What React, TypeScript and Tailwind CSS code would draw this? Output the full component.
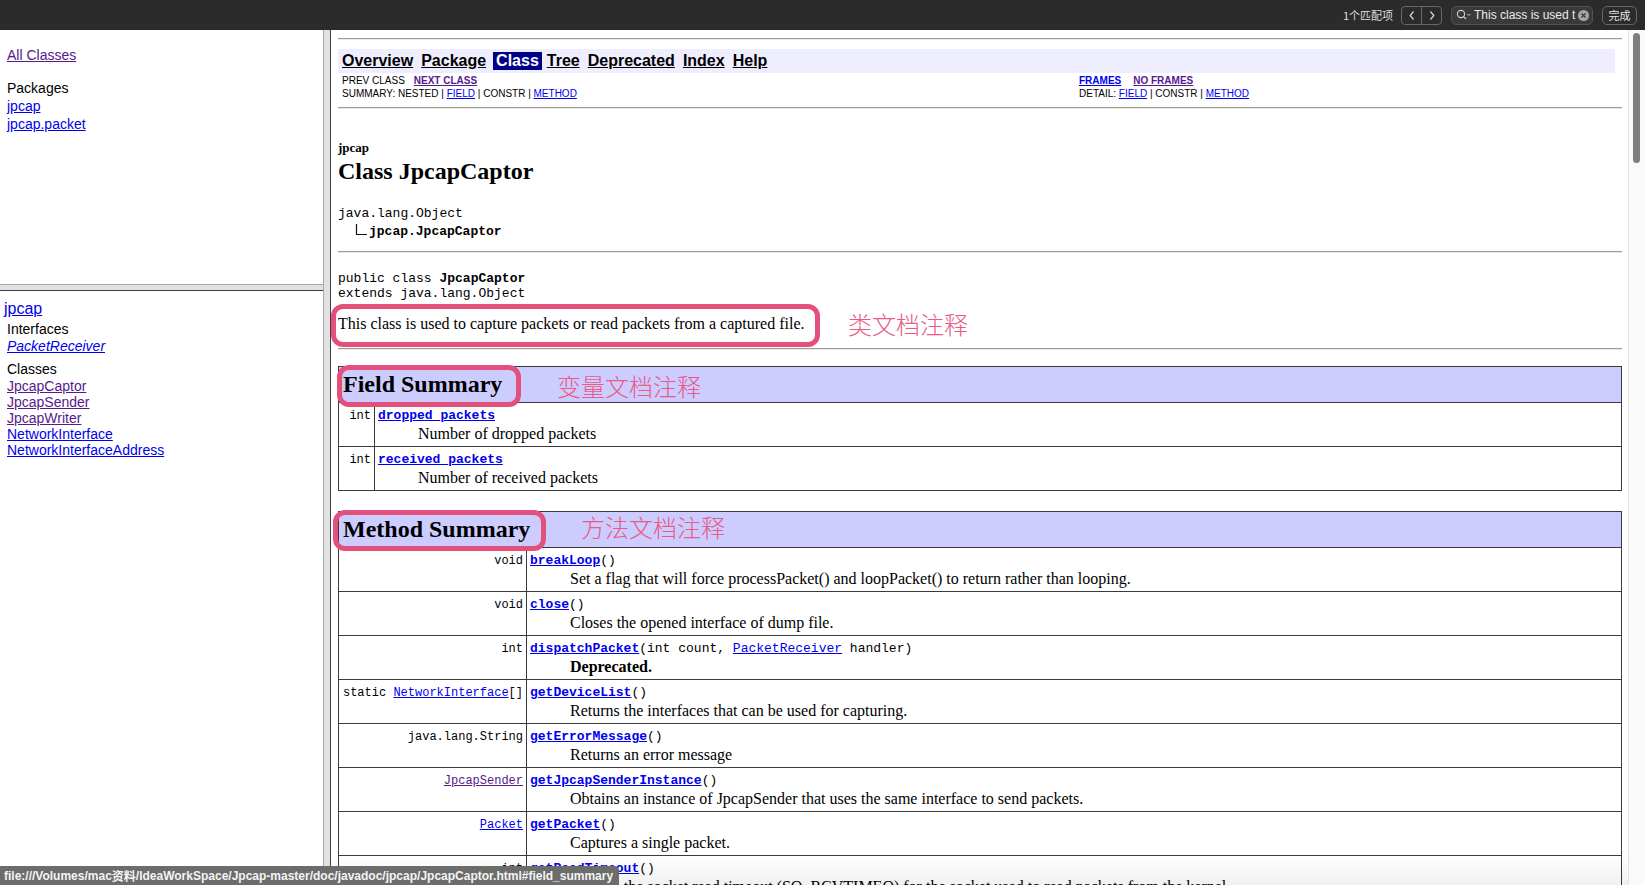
import React from 'react';

const SERIF = "font-['Liberation_Serif','Times_New_Roman',serif]";
const SANS = "font-['Liberation_Sans',Arial,sans-serif]";
const MONO = "font-['Liberation_Mono','Courier_New',monospace]";
const CJK = "font-['Noto_Sans_CJK_SC','Noto_Sans',sans-serif]";

const LINK = 'text-[#0000ee] underline';
const VISITED = 'text-[#551a8b] underline';

type Method = {
  type: React.ReactNode;
  name: string;
  args?: React.ReactNode;
  desc: React.ReactNode;
};

const methods: Method[] = [
  { type: 'void', name: 'breakLoop', desc: 'Set a flag that will force processPacket() and loopPacket() to return rather than looping.' },
  { type: 'void', name: 'close', desc: 'Closes the opened interface of dump file.' },
  {
    type: 'int',
    name: 'dispatchPacket',
    args: (
      <>
        (int count, <a className={LINK}>PacketReceiver</a> handler)
      </>
    ),
    desc: <b>Deprecated.</b>,
  },
  {
    type: (
      <>
        static <a className={LINK}>NetworkInterface</a>[]
      </>
    ),
    name: 'getDeviceList',
    desc: 'Returns the interfaces that can be used for capturing.',
  },
  { type: 'java.lang.String', name: 'getErrorMessage', desc: 'Returns an error message' },
  {
    type: <a className={VISITED}>JpcapSender</a>,
    name: 'getJpcapSenderInstance',
    desc: 'Obtains an instance of JpcapSender that uses the same interface to send packets.',
  },
  { type: <a className={LINK}>Packet</a>, name: 'getPacket', desc: 'Captures a single packet.' },
  {
    type: 'int',
    name: 'getReadTimeout',
    desc: 'Returns the socket read timeout (SO_RCVTIMEO) for the socket used to read packets from the kernel.',
  },
];

const fields = [
  { name: 'dropped_packets', desc: 'Number of dropped packets' },
  { name: 'received_packets', desc: 'Number of received packets' },
];

function Chevron({ dir }: { dir: 'left' | 'right' }) {
  return (
    <svg width="8" height="11" viewBox="0 0 8 11">
      <path
        d={dir === 'left' ? 'M5.5 1.5 L2.2 5.5 L5.5 9.5' : 'M2.5 1.5 L5.8 5.5 L2.5 9.5'}
        fill="none"
        stroke="#d8d8d8"
        strokeWidth="1.2"
      />
    </svg>
  );
}

function FindBar() {
  return (
    <div className={`flex h-[30px] shrink-0 items-center justify-end gap-[8px] bg-[#2b2b2b] pr-[8px] ${SANS}`}>
      <span className={`text-[11px] text-[#dedede] ${CJK}`}>1个匹配项</span>
      <div className="flex h-[19px] w-[41px] items-center rounded-[4px] border border-[#676767]">
        <span className="flex h-full flex-1 items-center justify-center">
          <Chevron dir="left" />
        </span>
        <span className="h-full w-px bg-[#676767]" />
        <span className="flex h-full flex-1 items-center justify-center">
          <Chevron dir="right" />
        </span>
      </div>
      <div className="ml-[1px] flex h-[19px] w-[142px] items-center rounded-[5px] border border-[#525252] bg-[#3a3a3a] pl-[4px] pr-[3px]">
        <svg width="16" height="12" viewBox="0 0 16 12">
          <circle cx="5" cy="5" r="3.6" fill="none" stroke="#cfcfcf" strokeWidth="1.1" />
          <path d="M7.6 7.6 L10 10" stroke="#cfcfcf" strokeWidth="1.2" />
          <path d="M11.3 5 L12.8 6.5 L14.3 5" fill="none" stroke="#cfcfcf" strokeWidth="1" />
        </svg>
        <span className="ml-[2px] flex-1 overflow-hidden whitespace-nowrap text-[12px] leading-[17px] text-[#ececec]">
          This class is used t
        </span>
        <svg width="11" height="11" viewBox="0 0 11 11">
          <circle cx="5.5" cy="5.5" r="5.5" fill="#a6a6a6" />
          <path d="M3.5 3.5 L7.5 7.5 M7.5 3.5 L3.5 7.5" stroke="#3a3a3a" strokeWidth="1.3" />
        </svg>
      </div>
      <div className={`ml-[1px] flex h-[19px] w-[35px] items-center justify-center rounded-[5px] border border-[#676767] text-[11px] text-[#e6e6e6] ${CJK}`}>
        完成
      </div>
    </div>
  );
}

function LeftFrames() {
  return (
    <div className={`flex w-[323px] shrink-0 flex-col text-black ${SANS}`}>
      <div className="h-[254px] shrink-0 pl-[7px] pt-[16px] text-[14px] leading-[18px]">
        <a className={VISITED}>All Classes</a>
        <div className="mt-[15px]">Packages</div>
        <div>
          <a className={LINK}>jpcap</a>
        </div>
        <div>
          <a className={LINK}>jpcap.packet</a>
        </div>
      </div>
      <div className="h-[7px] shrink-0 border-y border-t-[#a8a8a8] border-b-[#3c3c3c] bg-[#e2e2e2]" />
      <div className="flex-1 pt-[8px]">
        <div className="pl-[4px] text-[16px] leading-[19px]">
          <a className={LINK}>jpcap</a>
        </div>
        <div className="pl-[7px] text-[14px]">
          <div className="mt-[3px] leading-[17px]">Interfaces</div>
          <div className="leading-[17px]">
            <a className={`italic ${LINK}`}>PacketReceiver</a>
          </div>
          <div className="mt-[6px] leading-[17px]">Classes</div>
          <div className="leading-[16px]">
            <div><a className={VISITED}>JpcapCaptor</a></div>
            <div><a className={VISITED}>JpcapSender</a></div>
            <div><a className={VISITED}>JpcapWriter</a></div>
            <div><a className={LINK}>NetworkInterface</a></div>
            <div><a className={LINK}>NetworkInterfaceAddress</a></div>
          </div>
        </div>
      </div>
    </div>
  );
}

function Hr({ className = '' }: { className?: string }) {
  return <div className={`h-[2px] border-y border-t-[#9b9b9b] border-b-[#e9e9e9] ${className}`} />;
}

function NavBar() {
  const items = ['Overview', 'Package', 'Class', 'Tree', 'Deprecated', 'Index', 'Help'];
  return (
    <div className={`mr-[7px] mt-[9px] flex h-[24px] items-center gap-[2px] bg-[#eeeeff] pl-[1px] ${SANS}`}>
      {items.map((it) =>
        it === 'Class' ? (
          <span key={it} className="ml-[2px] bg-[#00008b] px-[3px] text-[16px] font-bold leading-[18px] text-white">
            {it}
          </span>
        ) : (
          <span key={it} className="px-[3px] text-[16px] font-bold leading-[18px] text-black underline">
            {it}
          </span>
        )
      )}
    </div>
  );
}

function SubNav() {
  return (
    <div className={`flex pt-[1px] text-[10px] leading-[13px] text-black ${SANS}`}>
      <div className="w-[737px] shrink-0 pl-[4px]">
        <div>
          PREV CLASS<a className={`ml-[9px] font-bold ${VISITED}`}>NEXT CLASS</a>
        </div>
        <div>
          SUMMARY: NESTED | <a className={LINK}>FIELD</a> | CONSTR | <a className={LINK}>METHOD</a>
        </div>
      </div>
      <div className="pl-[4px]">
        <div>
          <a className={`font-bold ${LINK}`}>FRAMES</a>
          <a className={`ml-[12px] font-bold ${VISITED}`}>NO FRAMES</a>
        </div>
        <div>
          DETAIL: <a className={LINK}>FIELD</a> | CONSTR | <a className={LINK}>METHOD</a>
        </div>
      </div>
    </div>
  );
}

function FieldTable() {
  return (
    <div className="mt-[16px] border border-[#3a3a3a]">
      <div className={`h-[36px] border-b border-[#3a3a3a] bg-[#ccccff] pl-[4px] text-[24px] font-bold leading-[35px] text-black ${SERIF}`}>
        Field Summary
      </div>
      {fields.map((f, i) => (
        <div key={f.name} className={`flex ${i < fields.length - 1 ? 'h-[44px] border-b border-[#3a3a3a]' : 'h-[43px]'}`}>
          <div className={`w-[36px] shrink-0 border-r border-[#3a3a3a] pr-[3px] pt-[6px] text-right text-[12px] leading-[14px] text-black ${MONO}`}>
            int
          </div>
          <div className="flex-1 pl-[3px] pt-[5px]">
            <div className={`h-[16px] text-[13px] leading-[16px] ${MONO}`}>
              <a className={`font-bold ${LINK}`}>{f.name}</a>
            </div>
            <div className={`pl-[40px] text-[16px] leading-[19px] text-black ${SERIF}`}>{f.desc}</div>
          </div>
        </div>
      ))}
    </div>
  );
}

function MethodTable() {
  return (
    <div className="mt-[20px] border border-[#3a3a3a]">
      <div className={`h-[36px] border-b border-[#3a3a3a] bg-[#ccccff] pl-[4px] text-[24px] font-bold leading-[35px] text-black ${SERIF}`}>
        Method Summary
      </div>
      {methods.map((m) => (
        <div key={m.name} className="flex h-[44px] border-b border-[#3a3a3a]">
          <div className={`w-[188px] shrink-0 whitespace-nowrap border-r border-[#3a3a3a] pr-[3px] pt-[6px] text-right text-[12px] leading-[14px] text-black ${MONO}`}>
            {m.type}
          </div>
          <div className="flex-1 pl-[3px] pt-[5px]">
            <div className={`h-[16px] whitespace-nowrap text-[13px] leading-[16px] text-black ${MONO}`}>
              <a className={`font-bold ${LINK}`}>{m.name}</a>
              {m.args ?? '()'}
            </div>
            <div className={`whitespace-nowrap pl-[40px] text-[16px] leading-[19px] text-black ${SERIF}`}>{m.desc}</div>
          </div>
        </div>
      ))}
    </div>
  );
}

function Annotations() {
  const box = 'pointer-events-none absolute rounded-[12px] border-[5px] border-[#e4507c]';
  const note = `pointer-events-none absolute whitespace-nowrap text-[24px] font-light leading-[30px] text-[#ea5a84] ${CJK}`;
  return (
    <>
      <div className={`${box} left-0 top-[274px] h-[43px] w-[489px]`} />
      <div className={`${note} left-[517px] top-[279px]`}>类文档注释</div>
      <div className={`${box} left-[6px] top-[335px] h-[42px] w-[184px]`} />
      <div className={`${note} left-[226px] top-[341px]`}>变量文档注释</div>
      <div className={`${box} left-[2px] top-[480px] h-[41px] w-[213px]`} />
      <div className={`${note} left-[250px] top-[482px]`}>方法文档注释</div>
    </>
  );
}

function Main() {
  return (
    <div className="relative min-w-0 flex-1 overflow-hidden bg-white pl-[7px] pr-[6px]">
      <Hr className="mt-[8px]" />
      <NavBar />
      <SubNav />
      <Hr className="mt-[7px]" />

      <div className={`mt-[31px] text-[13px] font-bold leading-[15px] text-black ${SERIF}`}>jpcap</div>
      <div className={`mt-[2px] text-[24px] font-bold leading-[28px] text-black ${SERIF}`}>Class JpcapCaptor</div>

      <div className={`mt-[20px] text-[13px] leading-[18px] text-black ${MONO}`}>
        <div>java.lang.Object</div>
        <div className="flex items-center">
          <svg className="ml-[16px]" width="14" height="18" viewBox="0 0 14 18">
            <path d="M2.5 1 V11.5 H13" fill="none" stroke="#111" strokeWidth="1.2" />
          </svg>
          <b className="ml-[1px]">jpcap.JpcapCaptor</b>
        </div>
      </div>

      <Hr className="mt-[10px]" />

      <div className={`mt-[18px] text-[13px] leading-[15px] text-black ${MONO}`}>
        <div>
          public class <b>JpcapCaptor</b>
        </div>
        <div>extends java.lang.Object</div>
      </div>

      <div className={`mt-[13px] text-[16px] leading-[19px] text-black ${SERIF}`}>
        This class is used to capture packets or read packets from a captured file.
      </div>

      <Hr className="mt-[15px]" />

      <FieldTable />
      <MethodTable />

      <Annotations />
      <div className="pointer-events-none absolute inset-x-0 bottom-0 h-[30px] bg-linear-to-b from-transparent to-[#0000000f]" />
    </div>
  );
}

function Scrollbar() {
  return (
    <div className="w-[17px] shrink-0 border-l border-[#e4e4e4] bg-[#fafafa] pl-[4px] pt-[3px]">
      <div className="h-[130px] w-[7px] rounded-full bg-[#7e7e7e]" />
    </div>
  );
}

export default function App() {
  return (
    <div className="relative flex h-[885px] w-[1645px] flex-col overflow-hidden bg-white">
      <FindBar />
      <div className="flex min-h-0 flex-1">
        <LeftFrames />
        <div className="w-[8px] shrink-0 border-x border-l-[#a8a8a8] border-r-[#3c3c3c] bg-[#e2e2e2]" />
        <Main />
        <Scrollbar />
      </div>
      <div className={`absolute bottom-0 left-0 flex h-[19px] w-[619px] items-center whitespace-nowrap rounded-tr-[5px] bg-[#6c6c6c] pl-[4px] text-[12px] font-bold text-[#f4f4f4] ${SANS}`}>
        file:///Volumes/mac<span className={CJK}>资料</span>/IdeaWorkSpace/Jpcap-master/doc/javadoc/jpcap/JpcapCaptor.html#field_summary
      </div>
    </div>
  );
}
